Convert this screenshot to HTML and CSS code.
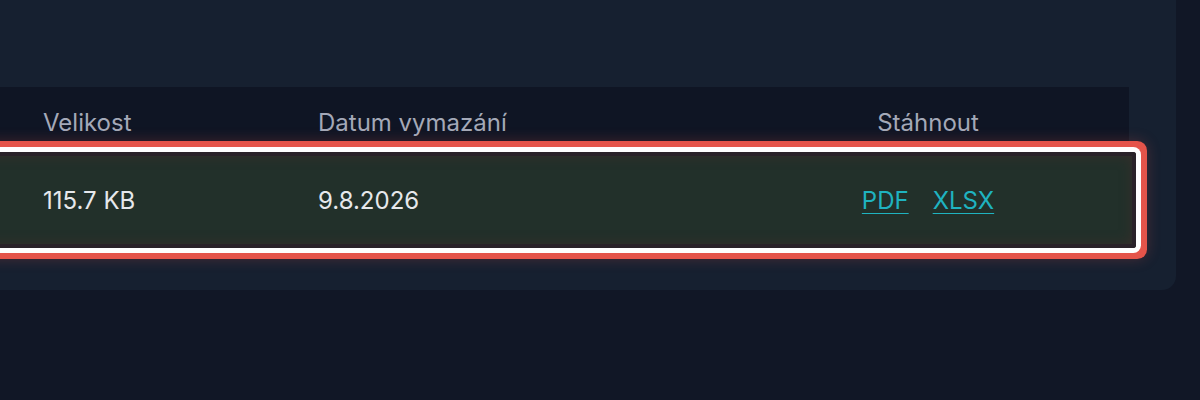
FILE: index.html
```html
<!DOCTYPE html>
<html lang="cs">
<head>
  <meta charset="UTF-8" />
  <meta name="viewport" content="width=device-width, initial-scale=1.0"/>
  <title>Exporty</title>
  <link rel="stylesheet" href="styles.css">
</head>
<body>
  <div class="card">
    <div class="table">
      <div class="table-head">
        <div class="cell col-size">Velikost</div>
        <div class="cell col-date">Datum vymazání</div>
        <div class="cell col-download">Stáhnout</div>
      </div>

      <div class="table-row selected">
        <div class="cell col-size">115.7 KB</div>
        <div class="cell col-date">9.8.2026</div>
        <div class="cell col-download">
          <a href="#">PDF</a>
          <a href="#">XLSX</a>
        </div>
      </div>
    </div>
  </div>
</body>
</html>
```

FILE: styles.css
```css
body {
  margin: 0;
  height: 100vh;
  overflow: hidden;
  background-color: #111726;
  font-family: Inter, "Noto Sans", sans-serif;
}

.card {
  margin-top: -20px;
  margin-left: -24px;
  width: 1200px;
  padding: 107px 47px 42px 0;
  box-sizing: border-box;
  background-color: #162030;
  border-radius: 14px;
}

.table {
  display: flex;
  flex-direction: column;
}

.table-head {
  display: flex;
  padding: 22px 0 9px 67px;
  background-color: #0f1524;
  color: #a4a9b8;
  font-size: 24px;
  line-height: 28px;
}

.table-row {
  display: flex;
  align-items: center;
  height: 96px;
  margin-top: 6px;
  margin-right: -7px;
  padding-left: 67px;
  color: #e6e8ec;
  font-size: 24px;
  background-color: #22302a;
  border-radius: 3px;
}

.table-row.selected {
  box-shadow:
    inset 0 0 0 4px #2a2229,
    inset 0 0 16px rgba(110, 40, 45, 0.45),
    0 0 0 5px #ffffff,
    0 0 0 11px #e5544a,
    0 0 14px 11px rgba(229, 84, 74, 0.25);
}

.cell {
  box-sizing: border-box;
}

.col-size {
  width: 275px;
}

.col-date {
  width: 510px;
}

.col-download {
  width: 200px;
  display: flex;
  justify-content: center;
  gap: 24px;
}

.col-download a {
  color: #1fb3c0;
  text-decoration: underline;
  text-underline-offset: 4px;
  text-decoration-thickness: 1px;
}
```
